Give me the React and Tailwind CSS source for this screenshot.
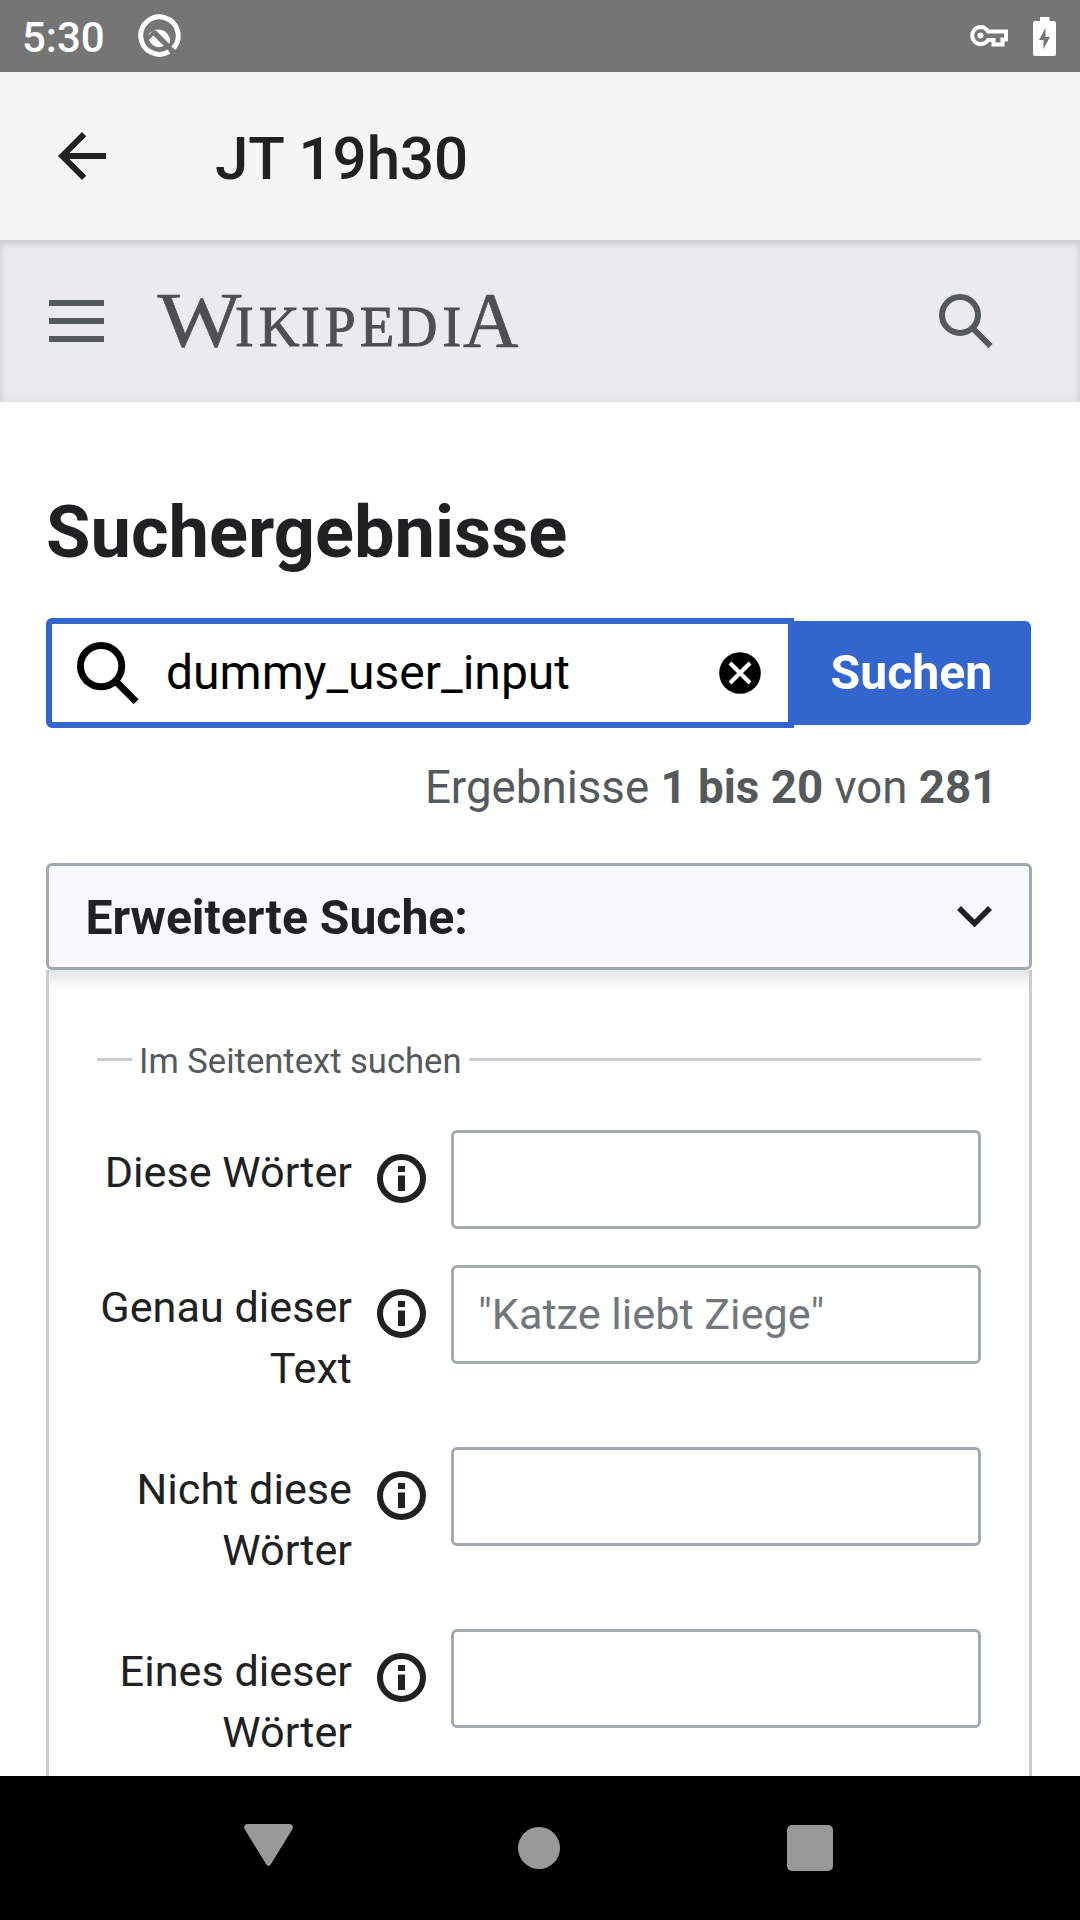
import React from "react";

function StatusBar() {
  return (
    <div className="flex h-[72px] shrink-0 items-center bg-[#757575] text-white">
      <span className="ml-[22px] mt-[3px] w-[114px] text-[42px] leading-none font-medium">5:30</span>
      <svg className="h-[44px] w-[46px]" viewBox="0 0 46 44" fill="none">
        <path d="M37.300 34.200A18.700 18.700 0 1 0 33 37.700" stroke="#fff" strokeWidth="5" />
        <path d="M11.800 22A11.700 11.700 0 0 1 34 27.500L33.200 29.800L20 16.600Q18.500 15.400 17 16.800z" fill="#fff" />
        <path d="M12.800 26L17.300 21.500L28 32Q18 36 12.800 26z" fill="#fff" />
      </svg>
      <svg className="ml-auto h-[24px] w-[40px]" viewBox="0 0 40 24" fill="none">
        <path
          d="M11.500 3A8.500 8.500 0 1 0 19 16H24.500V20.500H33.500V15.500H37V7.500H19A8.500 8.500 0 0 0 11.500 3z"
          stroke="#fff"
          strokeWidth="4"
        />
        <circle cx="11.500" cy="11.500" r="3" fill="#fff" />
      </svg>
      <svg className="mr-[24px] ml-[24px] h-[39px] w-[23px]" viewBox="0 0 23 39">
        <path
          fillRule="evenodd"
          fill="#fff"
          d="M7 0H16.500V4H21Q23 4 23 6V37Q23 39 21 39H2Q0 39 0 37V6Q0 4 2 4H7zM12.500 11L6 23H10.500V32L17 20H12.500z"
        />
      </svg>
    </div>
  );
}

function SearchIcon({ className, color }) {
  return (
    <svg className={className} viewBox="0 0 54 54" fill="none" stroke={color} strokeWidth="6">
      <circle cx="21" cy="21" r="18" />
      <path d="M33.500 34L51.500 52" />
    </svg>
  );
}

function InfoIcon() {
  return (
    <svg className="mt-[24px] ml-[25px] h-[49px] w-[49px] shrink-0" viewBox="0 0 49 49">
      <circle cx="24.500" cy="24.500" r="21.500" fill="none" stroke="#202122" strokeWidth="6" />
      <path d="M21 12h7v6h-7zM21 21.500h7V37h-7z" fill="#202122" />
    </svg>
  );
}

function Wordmark() {
  return (
    <svg
      className="ml-[46px] h-[110px] w-[380px]"
      viewBox="-6 0 380 110"
      fill="#4e4f51"
      stroke="#4e4f51"
      fontFamily="'Liberation Serif', serif"
    >
      <text x="1.500" y="79.500" fontSize="78" textLength="84" lengthAdjust="spacingAndGlyphs" strokeWidth="0.500">W</text>
      <text y="79.500" fontSize="56" x="79 103 145 168.500 204 241 286.500" strokeWidth="1">IKIPEDI</text>
      <text x="307" y="79.500" fontSize="78" textLength="55.500" lengthAdjust="spacingAndGlyphs" strokeWidth="0.500">A</text>
    </svg>
  );
}

const fields = [
  { label: "Diese Wörter", height: "h-[135px]" },
  { label: "Genau dieser Text", placeholder: '"Katze liebt Ziege"', height: "h-[182px]" },
  { label: "Nicht diese Wörter", height: "h-[182px]" },
  { label: "Eines dieser Wörter", height: "h-[182px]" },
];

function Field({ label, placeholder, height }) {
  return (
    <div className={`flex shrink-0 items-start ${height}`}>
      <label className="w-[255px] pt-[12px] text-right text-[43.200px] leading-[61px]">{label}</label>
      <InfoIcon />
      <div className="ml-[25px] flex h-[99px] w-[530px] shrink-0 items-center rounded-[6px] border-[3px] border-[#a2a9b1] bg-white pl-[24px] text-[43.200px] leading-none text-[#72777d]">
        {placeholder}
      </div>
    </div>
  );
}

export default function App() {
  return (
    <div className="flex h-[1920px] w-[1080px] flex-col overflow-hidden bg-white font-[Roboto,sans-serif] text-[#202122]">
      <StatusBar />
      <header className="flex h-[168px] shrink-0 items-center bg-[#f5f5f5]">
        <svg className="ml-[46px] h-[72px] w-[72px]" viewBox="0 0 24 24" fill="#212121">
          <path d="M20 11H7.830l5.590-5.590L12 4l-8 8 8 8 1.410-1.410L7.830 13H20v-2z" />
        </svg>
        <h1 className="mt-[6px] ml-[97px] text-[60px] leading-none font-medium text-[#212121]">JT 19h30</h1>
      </header>

      <div className="flex h-[162px] shrink-0 items-center bg-[#eaebef] shadow-[inset_0_6px_8px_-2px_rgba(0,0,0,0.10),inset_0_0_12px_rgba(0,0,0,0.07)]">
        <div className="ml-[49px] flex w-[55px] flex-col gap-[12px]">
          <span className="h-[6px] bg-[#54595d]" />
          <span className="h-[6px] bg-[#54595d]" />
          <span className="h-[6px] bg-[#54595d]" />
        </div>
        <Wordmark />
        <SearchIcon className="mr-[87px] ml-auto h-[54px] w-[54px]" color="#54595d" />
      </div>

      <main className="flex min-h-0 flex-1 flex-col overflow-hidden">
        <h2 className="mt-[89px] ml-[46px] h-[84px] shrink-0 text-[72.200px] leading-[84px] font-bold">Suchergebnisse</h2>

        <div className="mt-[43px] ml-[46px] flex h-[110px] shrink-0 items-center">
          <div className="flex h-[110px] w-[748px] items-center rounded-l-[6px] border-[6px] border-[#3366cc] bg-white text-black">
            <SearchIcon className="ml-[24.500px] h-[62px] w-[62px]" color="#000" />
            <span className="ml-[27.500px] text-[48px] leading-none">dummy_user_input</span>
            <svg className="mr-[27px] ml-auto h-[42px] w-[42px]" viewBox="0 0 42 42">
              <circle cx="21" cy="21" r="20.800" fill="#000" />
              <path d="M11 11l20 20M31 11L11 31" stroke="#fff" strokeWidth="4.200" />
            </svg>
          </div>
          <div className="flex h-[104px] w-[237px] items-center rounded-r-[6px] bg-[#3366cc] pl-[36.500px] text-[48.200px] leading-none font-bold text-white">
            Suchen
          </div>
        </div>

        <p className="mt-[33px] mr-[82.500px] h-[54px] shrink-0 text-right text-[45.700px] leading-[54px] text-[#54595d]">
          Ergebnisse <b>1 bis 20</b> von <b>281</b>
        </p>

        <section className="mt-[48px] ml-[46px] flex w-[986px] flex-1 flex-col">
          <div className="flex h-[107px] shrink-0 items-center rounded-[6px] border-[3px] border-[#a2a9b1] bg-[#f8f9fb]">
            <span className="mt-[4px] ml-[36.500px] text-[48.100px] leading-none font-bold">Erweiterte Suche:</span>
            <svg className="mr-[37px] ml-auto h-[21px] w-[35px]" viewBox="0 0 35 21" fill="none">
              <path d="M2 2L17.500 17.500L33 2" stroke="#202122" strokeWidth="5.600" />
            </svg>
          </div>
          <div className="flex flex-1 flex-col border-x-[3px] border-[#c8ccd1]">
            <div className="h-[20px] shrink-0 bg-linear-to-b from-[#e4e4e4] to-white" />
            <div className="mt-[44px] ml-[48px] flex h-[51px] w-[884px] shrink-0 items-center">
              <span className="h-[3px] w-[35px] bg-[#c8ccd1]" />
              <span className="mx-[7px] mt-[4px] text-[34.600px] leading-none whitespace-nowrap text-[#54595d]">Im Seitentext suchen</span>
              <span className="h-[3px] flex-1 bg-[#c8ccd1]" />
            </div>
            <div className="mt-[45px] ml-[48px] flex flex-col">
              {fields.map((f) => (
                <Field key={f.label} {...f} />
              ))}
            </div>
          </div>
        </section>
      </main>

      <nav className="flex h-[144px] shrink-0 items-center bg-black">
        <svg className="mb-[6px] ml-[244px] h-[42px] w-[49px]" viewBox="0 0 49 42" fill="#999">
          <path d="M3 0H46Q50 1 48.500 5L27 40Q24.500 44 22 40L0.500 5Q-1 1 3 0z" />
        </svg>
        <span className="ml-[225px] h-[42px] w-[42px] rounded-full bg-[#999]" />
        <span className="ml-[226.500px] h-[46px] w-[46px] rounded-[5px] bg-[#999]" />
      </nav>
    </div>
  );
}
